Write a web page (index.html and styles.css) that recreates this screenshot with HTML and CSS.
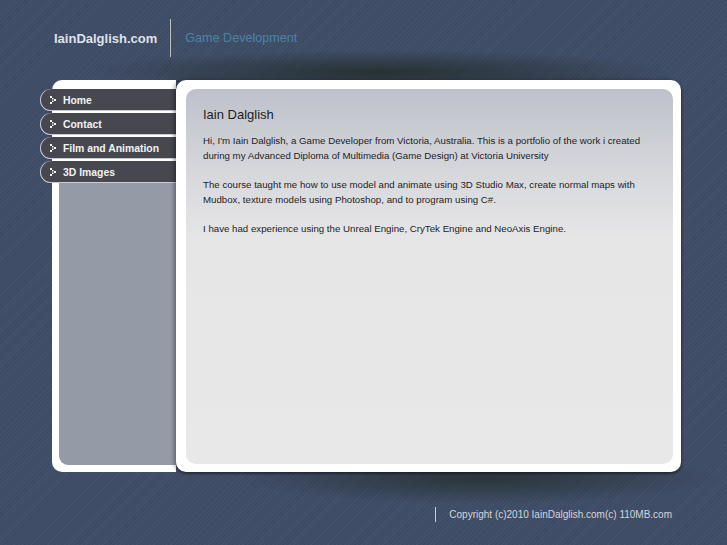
FILE: index.html
```html
<!DOCTYPE html>
<html>
  <head>
    <link rel="stylesheet" href="styles.css">
  </head>
  <body>
    <div class="header">
      <a href="#" class="brand">IainDalglish.com</a>
      <span class="divider"></span>
      <span class="tagline">Game Development</span>
    </div>
    <div class="layout">
      <div class="sidebar">
        <ul class="nav">
          <li><a href="#"><svg class="arrow" width="6" height="8" viewBox="0 0 6 8"><rect x="0" y="0" width="2" height="2"/><rect x="2" y="2" width="1.5" height="1.5"/><rect x="4" y="3" width="2" height="2"/><rect x="2" y="4.5" width="1.5" height="1.5"/><rect x="0" y="6" width="2" height="2"/></svg>Home</a></li>
          <li><a href="#"><svg class="arrow" width="6" height="8" viewBox="0 0 6 8"><rect x="0" y="0" width="2" height="2"/><rect x="2" y="2" width="1.5" height="1.5"/><rect x="4" y="3" width="2" height="2"/><rect x="2" y="4.5" width="1.5" height="1.5"/><rect x="0" y="6" width="2" height="2"/></svg>Contact</a></li>
          <li><a href="#"><svg class="arrow" width="6" height="8" viewBox="0 0 6 8"><rect x="0" y="0" width="2" height="2"/><rect x="2" y="2" width="1.5" height="1.5"/><rect x="4" y="3" width="2" height="2"/><rect x="2" y="4.5" width="1.5" height="1.5"/><rect x="0" y="6" width="2" height="2"/></svg>Film and Animation</a></li>
          <li><a href="#"><svg class="arrow" width="6" height="8" viewBox="0 0 6 8"><rect x="0" y="0" width="2" height="2"/><rect x="2" y="2" width="1.5" height="1.5"/><rect x="4" y="3" width="2" height="2"/><rect x="2" y="4.5" width="1.5" height="1.5"/><rect x="0" y="6" width="2" height="2"/></svg>3D Images</a></li>
        </ul>
        <div class="sidebar-fill"></div>
      </div>
      <div class="main">
        <div class="content">
          <h1>Iain Dalglish</h1>
          <p>Hi, I'm Iain Dalglish, a Game Developer from Victoria, Australia. This is a portfolio of the work i created during my Advanced Diploma of Multimedia (Game Design) at Victoria University</p>
          <p>The course taught me how to use model and animate using 3D Studio Max, create normal maps with Mudbox, texture models using Photoshop, and to program using C#.</p>
          <p>I have had experience using the Unreal Engine, CryTek Engine and NeoAxis Engine.</p>
        </div>
      </div>
    </div>
    <div class="footer">
      <span class="footer-line"></span>
      <span>Copyright (c)2010 IainDalglish.com(c) 110MB.com</span>
    </div>
  </body>
</html>
```

FILE: styles.css
```css
html, body {
  margin: 0;
  height: 100%;
}
body {
  font: 10px/15px "Liberation Sans", Arial, sans-serif;
  background-color: #3f4d67;
  background-image:
    radial-gradient(ellipse 290px 22px at 380px 72px, rgba(32,42,38,0.8), rgba(32,42,38,0)),
    radial-gradient(ellipse 240px 26px at 480px 478px, rgba(32,42,38,0.7), rgba(32,42,38,0)),
    repeating-linear-gradient(-45deg, rgba(255,255,255,0.025) 0, rgba(255,255,255,0.025) 1px, rgba(0,0,0,0.025) 1px, rgba(0,0,0,0.025) 3px);
  overflow: hidden;
}
a {
  text-decoration: none;
}
.header {
  height: 76px;
  display: flex;
  align-items: center;
  padding-left: 54px;
}
.brand {
  font-size: 13px;
  font-weight: bold;
  color: #dfe2e8;
}
.divider {
  width: 1px;
  height: 38px;
  background: #b8bcc4;
  margin: 0 14px 0 13px;
}
.tagline {
  font-size: 12.6px;
  color: #4a84a4;
}
.layout {
  display: flex;
  margin: 4px 0 0 52px;
  width: 629px;
  height: 392px;
}
.sidebar {
  width: 124px;
  background: #fff;
  border-radius: 10px 0 0 10px;
  padding: 9px 0 7px 7px;
  display: flex;
  flex-direction: column;
  box-sizing: border-box;
}
.nav {
  list-style: none;
  margin: 0 -20px 0 -19px;
  padding: 0;
}
.nav li {
  margin-bottom: 2px;
}
.nav li:last-child {
  margin-bottom: 0;
}
.nav a {
  display: flex;
  align-items: center;
  height: 22px;
  padding-left: 10px;
  background: #46474f;
  border-radius: 11px 0 0 11px;
  box-shadow: inset 1px 0 0 #c9ccd4, inset 0 -1px 0 #c9ccd4;
  color: #f2f2f2;
  font-size: 10.4px;
  font-weight: bold;
}
.arrow {
  fill: #f2f2f2;
  margin-right: 7px;
}
.sidebar-fill {
  flex: 1;
  background: #959aa7;
  border-radius: 0 0 0 9px;
  margin-right: -20px;
}
.main {
  flex: 1;
  background: #fff;
  border-radius: 10px;
  padding: 9px 8px 8px 10px;
  box-shadow: -2px 0 4px rgba(0,0,0,0.35), 1px 2px 2px rgba(0,0,0,0.3);
  position: relative;
  display: flex;
}
.content {
  flex: 1;
  border-radius: 10px;
  background: linear-gradient(#bec1cb 0, #d8d9dd 90px, #e6e6e7 150px, #e8e8e8 100%);
  padding: 17px 10px 0 17px;
  color: #1d1d1d;
}
.content h1 {
  margin: 0 0 9px;
  font-size: 13px;
  font-weight: normal;
  line-height: 18px;
}
.content p {
  margin: 0 0 14px;
  font-size: 9.7px;
}
.footer {
  display: flex;
  justify-content: flex-end;
  align-items: center;
  padding-right: 55px;
  margin-top: 35px;
  color: #d2d6de;
  font-size: 10px;
}
.footer-line {
  width: 1px;
  height: 15px;
  background: #c9ccd3;
  margin-right: 13px;
}
```
